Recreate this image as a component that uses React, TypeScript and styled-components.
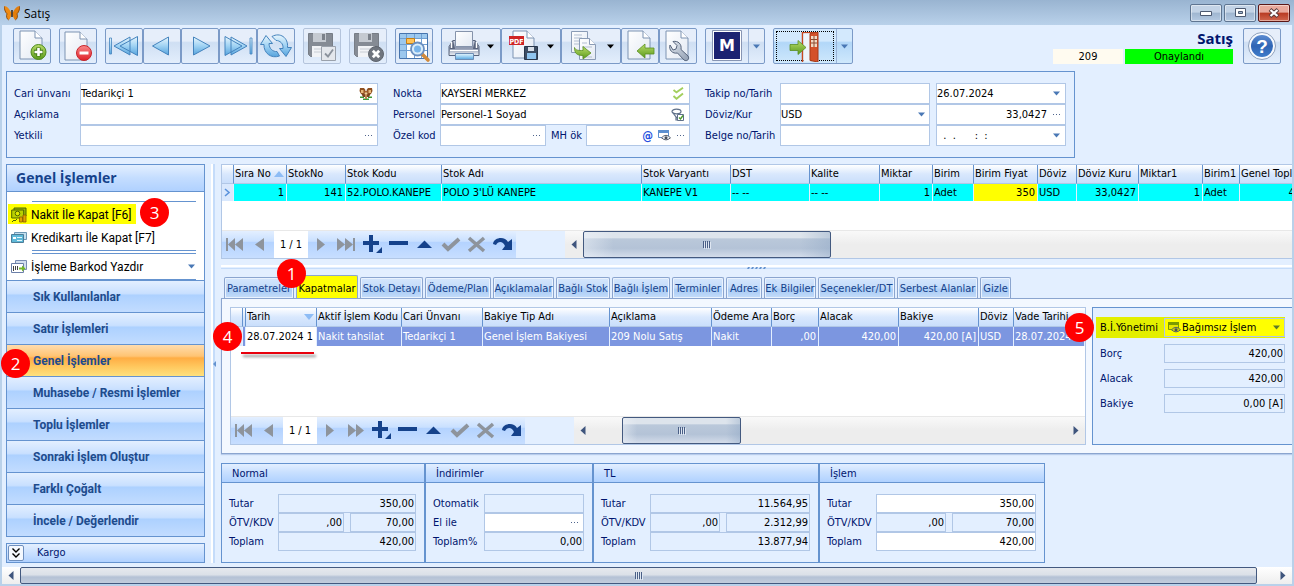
import React from 'react';
import styled, { createGlobalStyle, css } from 'styled-components';

const uiFont = `'DejaVu Sans Condensed', 'Liberation Sans', sans-serif`;
const shellFont = `'Open Sans', 'Noto Sans', sans-serif`;
const menuFont = `Roboto, 'Open Sans', sans-serif`;

const line = '#6593cf';
const softLine = '#b1c7e6';
const face = '#e3efff';
const navy = '#00156e';

const GlobalStyle = createGlobalStyle`
  * { box-sizing: border-box; }
  body { margin: 0; background: ${face}; }
  button, input, select { font: inherit; color: inherit; margin: 0; padding: 0; border: 0; background: none; border-radius: 0; }
  svg { display: block; flex: none; }
`;

/* ---------- window frame ---------- */

const Window = styled.div`
  min-height: 100vh;
  display: flex;
  flex-direction: column;
  background: ${face};
  border: solid #b9d1ea;
  border-width: 0 2px 2px;
  font: 11px/14px ${uiFont};
  color: #000;
`;

const TitleBar = styled.header`
  display: flex;
  align-items: center;
  height: 25px;
  margin: 0 -2px;
  padding: 0 4px;
  background: linear-gradient(#99b4d1, #b9d1ea);
`;

const WindowTitle = styled.h1`
  flex: 1;
  margin: 0 0 0 4px;
  padding-top: 2px;
  font: 12px/16px ${shellFont};
`;

const CaptionButtons = styled.div`
  display: flex;
  gap: 2px;
`;

const CaptionButton = styled.button<{ $close?: boolean }>`
  display: grid;
  place-items: center;
  width: 32px;
  height: 18px;
  border: 1px solid ${p => (p.$close ? '#5a1717' : '#5f7591')};
  border-radius: 2px;
  background: ${p =>
    p.$close
      ? 'linear-gradient(#e9a99c 0 45%, #b83a22 50%, #d0674f)'
      : 'linear-gradient(#c3d3e6 0 45%, #9fb6d0 50%, #b5cae2)'};
  box-shadow: inset 0 0 0 1px rgba(255, 255, 255, 0.45);
`;

/* ---------- toolbar ---------- */

const Toolbar = styled.div`
  display: flex;
  gap: 8px;
  padding: 3px 11px 7px;
`;

const ToolGroup = styled.div`
  display: flex;
`;

const ToolButton = styled.button<{ $width?: number; $disabled?: boolean; $active?: boolean }>`
  display: flex;
  width: ${p => p.$width ?? 38}px;
  height: 36px;
  border: 1px solid ${p => (p.$disabled ? '#b4c4dc' : '#7b9ac7')};
  border-radius: 2px;
  background: ${p =>
    p.$active
      ? 'linear-gradient(#d3e9fd 0 35%, #b2d7f8 40%, #cfe8fc)'
      : 'linear-gradient(#e6eefa 0 35%, #cfdff3 40%, #e3eefc)'};
`;

const FocusFrame = styled.span`
  flex: 1;
  margin: 2px;
  border: 1px dotted #000;
`;

const ToolbarStatus = styled.div`
  display: grid;
  grid-template-columns: 70px 108px;
  grid-template-rows: 21px 15px;
  column-gap: 2px;
  margin: 0 2px 0 auto;
  text-align: center;
`;

const StatusTitle = styled.h2`
  grid-column: 1 / 3;
  margin: 0;
  text-align: right;
  font: bold 15px/20px ${shellFont};
  color: ${navy};
`;

const StatusCell = styled.output<{ $bg: string }>`
  background: ${p => p.$bg};
  line-height: 15px;
`;

/* ---------- fields ---------- */

const FormPanel = styled.form`
  display: flex;
  gap: 15px;
  align-self: flex-start;
  margin-left: 4px;
  padding: 11px 8px 11px 7px;
  border: 1px solid ${line};
`;

const FormRow = styled.div`
  display: flex;
  align-items: stretch;
`;

const FieldLabel = styled.label<{ $width: number; $inset?: number }>`
  width: ${p => p.$width}px;
  padding-left: ${p => p.$inset ?? 0}px;
  align-self: center;
  color: ${navy};
  white-space: nowrap;
`;

const FieldBox = styled.span<{ $width?: number; $height?: number; $flat?: boolean; $bg?: string; $gap?: boolean; $tight?: boolean }>`
  display: flex;
  align-items: center;
  gap: ${p => (p.$tight ? 1 : 5)}px;
  ${p => (p.$width ? `width: ${p.$width}px;` : 'flex: 1; min-width: 0;')}
  height: ${p => p.$height ?? 21}px;
  padding-right: 1px;
  margin-left: ${p => (p.$gap ? 6 : 0)}px;
  border: 1px solid ${softLine};
  background: ${p => p.$bg ?? (p.$flat ? face : '#fff')};
  & > button:last-child, & > svg:last-child { margin-right: 3px; }
  & > svg:first-child { margin-left: 3px; }
`;

const textControl = css`
  flex: 1;
  min-width: 0;
  width: 100%;
  height: 100%;
  outline: 0;
`;

const TextInput = styled.input<{ $right?: boolean }>`
  ${textControl}
  text-align: ${p => (p.$right ? 'right' : 'left')};
`;

const SelectInput = styled.select`
  ${textControl}
  appearance: none;
`;

const IconButton = styled.button`
  display: grid;
  place-items: center;
  min-width: 9px;
  height: 100%;
`;

const AtSign = styled.span`
  font: bold 12px/16px ${uiFont};
  color: #2450e0;
`;

/* ---------- work area ---------- */

const Work = styled.div`
  flex: 1;
  display: grid;
  grid-template-columns: 199px 16px minmax(0, 1fr);
  margin: 6px 0 4px 4px;
`;

const Sidebar = styled.aside`
  display: flex;
  flex-direction: column;
`;

const SideFrame = styled.div`
  border: 1px solid ${line};
`;

const SideHeader = styled.h2`
  margin: 0;
  height: 27px;
  padding-left: 9px;
  border-bottom: 1px solid ${line};
  background: linear-gradient(#e3efff, #c4ddff 50%, #b0d1ff);
  font: bold 14px/26px ${shellFont};
  color: #15428b;
`;

const SideBody = styled.div`
  position: relative;
  display: flex;
  flex-direction: column;
  align-items: flex-start;
  height: 88px;
  padding: 9px 8px 0 1px;
  background: #fff;
`;

const SideRule = styled.hr`
  flex: none;
  align-self: stretch;
  height: 1px;
  margin: 0 0 2px 24px;
  border: 0;
  background: ${line};
`;

const SideAction = styled.button<{ $marked?: boolean; $wide?: boolean }>`
  flex: none;
  display: flex;
  align-items: center;
  gap: 4px;
  height: 20px;
  margin-bottom: 3px;
  padding: 1px ${p => (p.$wide ? 1 : 5)}px 0 3px;
  font: 12px/18px ${menuFont};
  white-space: nowrap;
  ${p => p.$wide && 'align-self: stretch;'}
  background: ${p => (p.$marked ? '#ff0' : 'none')};
  & > svg:last-child:not(:first-child) { margin-left: auto; }
`;

const SideGroup = styled.button<{ $active?: boolean }>`
  position: relative;
  display: block;
  width: 100%;
  height: 32px;
  padding-left: 26px;
  border-top: 1px solid ${line};
  text-align: left;
  font: bold 12px/30px ${menuFont};
  color: #1e4b8c;
  background: ${p =>
    p.$active
      ? 'linear-gradient(#ffdcae, #ffc473 36%, #ffad44 42%, #ffc85e 70%, #fee17e)'
      : 'linear-gradient(#e3efff, #c9e0ff 40%, #add1ff 46%, #c2dcff)'};
`;

const CargoBar = styled.div`
  display: flex;
  align-items: center;
  height: 20px;
  margin-top: 6px;
  padding-left: 1px;
  gap: 13px;
  border: 1px solid ${line};
  background: linear-gradient(#e3efff, #b0d1ff);
  color: ${navy};
`;

const ExpandButton = styled.button`
  display: grid;
  place-items: center;
  width: 16px;
  height: 16px;
  border: 1px solid #6f8fbd;
  border-radius: 2px;
  background: #f4f8fe;
`;

const VerticalSplitter = styled.div`
  display: flex;
  align-items: center;
  width: 4px;
  margin-left: 6px;
  border-left: 2px solid #fff;
  background: #c5dcfa;
`;

const Main = styled.main`
  display: flex;
  flex-direction: column;
  min-width: 0;
`;

/* ---------- data grids ---------- */

const GridFrame = styled.section<{ $grow?: boolean }>`
  display: flex;
  flex-direction: column;
  min-width: 0;
  ${p => p.$grow && 'flex: 1; border-right: 1px solid #b1c7e6;'}
  border-top: 1px solid ${softLine};
  border-left: 1px solid ${softLine};
  border-bottom: 1px solid ${softLine};
  background: #fff;
`;

const TableClip = styled.div<{ $space: number }>`
  flex: 1;
  overflow: hidden;
  padding-bottom: ${p => p.$space}px;
`;

const DataTable = styled.table<{ $fill?: boolean }>`
  table-layout: fixed;
  width: ${p => (p.$fill ? '100%' : '1px')};
  border-spacing: 0;
  white-space: nowrap;
`;

const Col = styled.col<{ $w?: number }>`
  width: ${p => (p.$w ? `${p.$w}px` : 'auto')};
`;

const HeadCell = styled.th`
  height: 19px;
  padding: 0 2px 0 1px;
  overflow: hidden;
  border-right: 1px solid ${line};
  border-bottom: 1px solid ${softLine};
  background: linear-gradient(#fff, #d9e8fd 50%, #c9defb);
  font-weight: normal;
  text-align: left;
  &:last-child { border-right: 0; }
`;

const HeadContent = styled.span`
  display: flex;
  align-items: center;
  overflow: hidden;
`;

const HeadText = styled.span`
  flex: 1;
  overflow: hidden;
`;

const Cell = styled.td<{ $right?: boolean; $bg?: string; $color?: string; $height?: number }>`
  height: ${p => p.$height ?? 17}px;
  padding: 0 2px 0 1px;
  overflow: hidden;
  border-right: 1px solid #e3efff;
  text-align: ${p => (p.$right ? 'right' : 'left')};
  background: ${p => p.$bg ?? '#0ff'};
  color: ${p => p.$color ?? '#000'};
`;

const GridFooter = styled.div`
  display: flex;
  height: 28px;
  border-top: 1px solid #e8e8e8;
`;

const Navigator = styled.div`
  display: flex;
  width: 343px;
  background: linear-gradient(90deg, transparent 294px, ${face} 294px),
    linear-gradient(#e3efff, #c9e0ff 38%, #b4d3ff 42%, #c7deff);
`;

const NavButton = styled.button`
  display: grid;
  place-items: center;
  width: 26px;
`;

const NavPosition = styled.output`
  width: 34px;
  background: #fff;
  text-align: center;
  line-height: 28px;
`;

const ScrollTrack = styled.div`
  flex: 1;
  display: flex;
  background: linear-gradient(#f9f9f9, #ededed 50%);
`;

const ScrollArrow = styled.button`
  display: grid;
  place-items: center;
  width: 18px;
`;

const ScrollThumb = styled.div<{ $width?: number; $offset?: number; $page?: boolean }>`
  display: grid;
  place-items: center;
  ${p => (p.$width ? `width: ${p.$width}px;` : 'flex: 1;')}
  margin-left: ${p => p.$offset ?? 0}px;
  border: 1px solid #43597f;
  border-radius: 2px;
  background: ${p =>
    p.$page
      ? 'linear-gradient(#e6e9ee, #dbe0e8 45%, #b4c1d5 60%, #c2cddd)'
      : `linear-gradient(90deg, rgba(240,244,250,.5), transparent 12%, transparent 88%, rgba(140,165,195,.4)),
         linear-gradient(#dde4ec 0 22%, #bac8da 28%, #b4c3d7 65%, #d3dcea)`};
`;

const ScrollSpacer = styled.div<{ $width?: number }>`
  ${p => (p.$width ? `width: ${p.$width}px;` : 'flex: 1;')}
`;

const PageScroll = styled.div`
  display: flex;
  height: 17px;
  background: linear-gradient(#fff, #eee);
`;

/* ---------- tabs ---------- */

const HorizontalSplitter = styled.div`
  display: flex;
  justify-content: center;
  height: 4px;
  margin: 6px 0;
  border-top: 2px solid #fff;
  border-bottom: 1px solid #c5dcfa;
`;

const TabBar = styled.div`
  position: relative;
  display: flex;
  align-items: flex-end;
  gap: 2px;
  height: 23px;
  padding-left: 3px;
`;

const Tab = styled.button<{ $w: number; $active?: boolean }>`
  width: ${p => p.$w}px;
  height: ${p => (p.$active ? 24 : 21)}px;
  padding-top: 2px;
  ${p => p.$active && 'margin-bottom: -1px;'}
  border: 1px solid #8ba5cf;
  border-bottom: 0;
  border-radius: 2px 2px 0 0;
  box-shadow: inset 0 0 0 1px ${p => (p.$active ? '#ff0' : '#e9f2fe')};
  white-space: nowrap;
  color: ${p => (p.$active ? '#000' : '#15428b')};
  background: ${p => (p.$active ? '#ff0' : 'linear-gradient(#d5e6fc, #c4dcfa 45%, #aaccf5 60%, #c4dcfa)')};
`;

const TabPage = styled.div`
  position: relative;
  flex: 1;
  display: flex;
  gap: 6px;
  padding: 8px 0 8px 8px;
  border: 1px solid #8ba5cf;
  border-right: 0;
  background: #f3f8ff;
  box-shadow: 0 1px 1px #b9cdec;
`;

const BalancePanel = styled.form`
  position: relative;
  display: flex;
  flex-direction: column;
  gap: 6px;
  width: 200px;
  padding: 9px 7px 0 3px;
  border: 1px solid ${line};
  border-right: 0;
  background: ${face};
`;

const BalanceRow = styled.div<{ $marked?: boolean }>`
  display: flex;
  height: ${p => (p.$marked ? 21 : 19)}px;
  padding: ${p => (p.$marked ? '1px 0' : '0')};
  background: ${p => (p.$marked ? '#e3ef00' : 'none')};
  label { ${p => p.$marked && 'color: #000;'} }
`;

/* ---------- totals ---------- */

const Totals = styled.div`
  display: flex;
  margin-top: 9px;
`;

const TotalsPanel = styled.section<{ $w: number }>`
  width: ${p => p.$w}px;
  border: 1px solid ${line};
`;

const TotalsTitle = styled.h3`
  margin: 0;
  height: 19px;
  padding-left: 10px;
  border-bottom: 1px solid ${line};
  background: linear-gradient(#e3efff, #c9e0ff 45%, #b0d1ff);
  font: inherit;
  line-height: 19px;
  color: ${navy};
`;

const TotalsBody = styled.div`
  padding: 11px 8px 11px 7px;
`;

/* ---------- call-outs ---------- */

const Badge = styled.span<{ $x: number; $y: number }>`
  position: absolute;
  left: ${p => p.$x}px;
  top: ${p => p.$y}px;
  z-index: 2;
  width: 29px;
  height: 29px;
  border-radius: 50%;
  background: #f00;
  color: #fff;
  text-align: center;
  font: 17px/29px ${shellFont};
`;

const Underline = styled.span`
  position: absolute;
  left: 19px;
  top: 53px;
  width: 73px;
  height: 2px;
  background: #e8000c;
  box-shadow: 2px 3px 3px rgba(0, 0, 0, 0.45);
`;

/* ---------- small glyphs ---------- */

const Down = ({ color = '#4a78b5' }: { color?: string }) => (
  <svg width="7" height="5" viewBox="0 0 7 5"><path d="M0 .5h7L3.500 4.500z" fill={color} /></svg>
);
const Dots = () => (
  <svg width="9" height="3" viewBox="0 0 9 3"><path d="M1 1h1v1H1zM4 1h1v1H4zM7 1h1v1H7z" fill="#4f648c" /></svg>
);
const Side = ({ right }: { right?: boolean }) => (
  <svg width="6" height="9" viewBox="0 0 6 9"><path d={right ? 'M.5 0v9L5.500 4.500z' : 'M5.500 0v9L.5 4.500z'} fill="#3f557d" /></svg>
);
const Grip = () => (
  <svg width="8" height="8" viewBox="0 0 8 8"><path d="M.5 0v7M2.500 0v7M4.500 0v7M6.500 0v7" stroke="#4a5f86" /><path d="M1.500 1v7M3.500 1v7M5.500 1v7M7.500 1v7" stroke="#dfe7f2" /></svg>
);
const Sort = ({ up }: { up?: boolean }) => (
  <svg width="10" height="6" viewBox="0 0 10 6"><path d={up ? 'M0 6h10L5 0z' : 'M0 0h10L5 6z'} fill="#8dbcf5" /></svg>
);
const Butterfly = () => (
  <svg width="16" height="16" viewBox="0 0 16 16">
    <path d="M7.500 8C5 2.500 2 .8 0 1.200c.2 3.500 1 6 3 7.600C1.800 11 2.600 14 4.600 15 6.300 14 7.300 11 7.500 8z" fill="#f08a12" />
    <path d="M8.500 8C11 2.500 14 .8 16 1.200c-.2 3.500-1 6-3 7.600 1.200 2.200.4 5.200-1.600 6.200C9.700 14 8.700 11 8.500 8z" fill="#e27d0c" />
    <path d="M0 1.200C.5 5 1.500 7.500 3 8.800 2 11 2.600 14 4.600 15M16 1.200c-.5 3.800-1.500 6.300-3 7.600 1 2.200.4 5.200-1.600 6.200" stroke="#7a3f08" fill="none" strokeWidth=".8" />
    <path d="M8 5v7" stroke="#2c1706" strokeWidth="1.400" />
  </svg>
);
const Dealer = () => (
  <svg width="14" height="13" viewBox="0 0 14 13">
    <path d="M1 9.500h4v1.500H1zM9 9.500h4v1.500H9zM4 11.500h6V13H4z" fill="#3f9a38" />
    <path d="M2 6l2 4h6l2-4-3 1H5z" fill="#7d4420" />
    <path d="M6 8h2v4H6z" fill="#b98a50" />
    <path d="M1 1h4l1.500 2L5.500 7H2L.5 4zM13 1H9L7.500 3l1 4H12l1.500-3z" fill="#8f5020" />
    <path d="M2 3h2.500v3H2zM9.500 3H12v3H9.500z" fill="#e8b878" />
    <path d="M5.500 4h3v4h-3z" fill="#a5622c" /><path d="M6 5.500h2v2H6z" fill="#f0cc98" />
  </svg>
);
const DoubleCheck = () => (
  <svg width="13" height="13" viewBox="0 0 13 13"><path d="M1.500 3l3 2.400L11 .8M1.500 9l3 2.800L11 6.500" fill="none" stroke="#a3cf5d" strokeWidth="1.900" /></svg>
);
const PersonPick = () => (
  <svg width="14" height="14" viewBox="0 0 14 14">
    <ellipse cx="5.500" cy="3.500" rx="4.500" ry="2.300" fill="#fff" stroke="#5f7089" strokeWidth="1.200" />
    <path d="M2 5l3 4v3h2M5 9c1 1 2 1 3 0" fill="none" stroke="#5f7089" strokeWidth="1.200" />
    <path d="M6.500 6.500h6v6h-6z" fill="#fff" stroke="#5f7089" /><path d="M8 9.500l1.500 1.500 2.500-3.500" fill="none" stroke="#4c9a2a" strokeWidth="1.400" />
  </svg>
);
const EyeWindow = ({ tint = '#5b8fd0' }: { tint?: string }) => (
  <svg width="13" height="11" viewBox="0 0 13 11">
    <path d="M.5.5h10v7H.5z" fill={tint === '#5b8fd0' ? '#fff' : '#e6e600'} stroke={tint} /><path d="M0 0h11v3H0z" fill={tint} />
    <path d="M3.500 7.800Q8 2.800 12.500 7.800 8 12 3.500 7.800z" fill={tint === '#5b8fd0' ? '#f2f4f8' : '#d9d900'} stroke="#56606e" /><circle cx="8" cy="7.700" r="1.500" fill="#46505c" />
  </svg>
);

/* ---------- side panel icons ---------- */

const CashIcon = () => (
  <svg width="16" height="16" viewBox="0 0 16 16">
    <path d="M3 1h12v8H3z" fill="#9db800" stroke="#4d6400" /><path d="M.7 3h12v8H.7z" fill="#b9cf00" stroke="#4d6400" />
    <circle cx="6.500" cy="6.500" r="2.300" fill="#e0ea00" stroke="#4d6400" /><path d="M1 15l2-2 1 1 2-2" fill="none" stroke="#4d6400" />
    <path d="M8.500 10h3v5h-3zM12 8h3v7h-3z" fill="#e0a000" stroke="#8a5c00" strokeWidth=".8" />
  </svg>
);
const CardIcon = () => (
  <svg width="16" height="12" viewBox="0 0 16 12">
    <path d="M3.500 .5h12v7h-12z" fill="#c4dfee" stroke="#6d97b5" /><path d="M.5 2.500h12v8H.5z" fill="#5fb9d8" stroke="#4c7d98" />
    <path d="M2 5h3v2H2z" fill="#fff" /><path d="M6 5.500h5M6 8.500h5" stroke="#e3f6fc" />
  </svg>
);
const BarcodeIcon = () => (
  <svg width="16" height="14" viewBox="0 0 16 14">
    <path d="M4.500.5h11v9h-11z" fill="#d5dfef" stroke="#7a8db3" /><path d="M.5 3.500h12v9H.5z" fill="#fff" stroke="#6b7fa8" />
    <path d="M2.500 6v5M4.500 6v4M6.500 6v4" stroke="#444" /><path d="M8 7.500h3v-2l3.500 3-3.500 3v-2H8z" fill="#76b82a" />
  </svg>
);

/* ---------- toolbar icons ---------- */

const Page = ({ x = 6, y = 2, w = 22, h = 28 }: { x?: number; y?: number; w?: number; h?: number }) => (
  <>
    <path d={`M${x} ${y}h${w - 7}l7 7v${h - 7}h-${w}z`} fill="url(#paper)" stroke="#7d93b2" />
    <path d={`M${x + w - 7} ${y}v7h7`} fill="#fff" stroke="#7d93b2" />
  </>
);
const Tool = ({ children, w = 36 }: { children: React.ReactNode; w?: number }) => (
  <svg width={w} height="34" viewBox={`0 0 ${w} 34`}>{children}</svg>
);
const HiddenDefs = styled.svg`
  position: absolute;
`;
const Defs = () => (
  <HiddenDefs width="0" height="0" aria-hidden="true">
    <defs>
      <linearGradient id="paper" x2="1" y2="1"><stop offset="0" stopColor="#fff" /><stop offset="1" stopColor="#e2e9f3" /></linearGradient>
      <linearGradient id="blue" x2="0" y2="1"><stop offset="0" stopColor="#e8f6fd" /><stop offset=".5" stopColor="#9fd2f3" /><stop offset="1" stopColor="#55a3dd" /></linearGradient>
      <linearGradient id="green" x2="0" y2="1"><stop offset="0" stopColor="#b9dc6a" /><stop offset="1" stopColor="#5a9a1c" /></linearGradient>
      <linearGradient id="red" x2="0" y2="1"><stop offset="0" stopColor="#f9898a" /><stop offset="1" stopColor="#e02027" /></linearGradient>
      <linearGradient id="help" x2="0" y2="1"><stop offset="0" stopColor="#5b8bd0" /><stop offset=".5" stopColor="#2f65b5" /><stop offset="1" stopColor="#3f7cc9" /></linearGradient>
      <linearGradient id="printer" x2="0" y2="1"><stop offset="0" stopColor="#cfd6e4" /><stop offset=".5" stopColor="#8b96ad" /><stop offset="1" stopColor="#eef1f7" /></linearGradient>
      <linearGradient id="steel" x2="1" y2="1"><stop offset="0" stopColor="#e3e9f0" /><stop offset="1" stopColor="#8f9db1" /></linearGradient>
    </defs>
  </HiddenDefs>
);
const tri = { fill: 'url(#blue)', stroke: '#4483bd', strokeLinejoin: 'round' as const };
const Floppy = () => (
  <>
    <path d="M4.500 4.500h24v23h-22l-2-2z" fill="#858b94" stroke="#777d86" /><path d="M9 4h13v9H9z" fill="#c5cad1" /><path d="M18 5h3v6h-3z" fill="#7b818a" />
    <path d="M8 17h17v11H8z" fill="#f1f3f6" /><path d="M10 20h12M10 23h12" stroke="#c8cdd4" />
  </>
);
const NewIcon = () => (
  <Tool><Page /><circle cx="24.500" cy="23" r="7.500" fill="url(#green)" stroke="#4d8a1c" /><path d="M24.500 18.500v9M20 23h9" stroke="#3d7512" strokeWidth="4.400" /><path d="M24.500 19v8M20.500 23h8" stroke="#fff" strokeWidth="2.600" /></Tool>
);
const DeleteIcon = () => (
  <Tool><Page x={5} y={3} /><circle cx="24" cy="24" r="7.500" fill="url(#red)" stroke="#c9252b" /><path d="M19.500 24h9" stroke="#fff" strokeWidth="3" /></Tool>
);
const FirstIcon = () => (
  <Tool><path d="M3.500 9v16h2V9z" {...tri} strokeWidth=".8" /><path d="M24 8v18L8 17zM31.500 7.500v19L14 17z" {...tri} /></Tool>
);
const PrevIcon = () => <Tool><path d="M24.500 8v18L8.500 17z" {...tri} /></Tool>;
const NextIcon = () => <Tool><path d="M11.500 8v18L28 17z" {...tri} /></Tool>;
const LastIcon = () => (
  <Tool><path d="M30 9v16h2V9z" {...tri} strokeWidth=".8" /><path d="M5 7.500v19L22 17zM11 8v18L27 17z" {...tri} /></Tool>
);
const RefreshIcon = () => (
  <Tool>
    <path d="M2.500 15.500L8 6.500l6.500 8h-3.500c0 5 4 8.500 8 8l2.500 4.500c-8.500 3-16-3-15.500-11.500z" {...tri} />
    <path d="M33.500 18.500L28 27.500l-6.500-8h3.500c.5-5-3-8-7-8l-4-4c8-4.500 16.500 1 15.500 11z" {...tri} />
  </Tool>
);
const SaveIcon = () => (
  <Tool><Floppy /><path d="M17.500 17.500h14v14h-14z" fill="#e4e7ec" stroke="#9aa1ab" /><path d="M21 24.500l3 3 5-7" fill="none" stroke="#8b929c" strokeWidth="1.800" /></Tool>
);
const CancelIcon = () => (
  <Tool><Floppy /><circle cx="26" cy="25" r="7.500" fill="#6f757e" stroke="#5f656e" /><path d="M22.800 21.800l6.400 6.400M29.200 21.800l-6.400 6.400" stroke="#fff" strokeWidth="2.800" /></Tool>
);
const SearchGridIcon = () => (
  <Tool>
    <path d="M3.500 4.500h28v25h-28z" fill="#fff" stroke="#4674ae" /><path d="M4 5h27v4H4zM4 9h6v20H4z" fill="#9cc8ee" />
    <path d="M10.500 5v24M18.500 5v24M25.500 5v24M4 9.500h27M4 15.500h27M4 21.500h27" stroke="#6f9fd2" fill="none" />
    <path d="M10.500 9.500h8v5h-8z" fill="#ffc256" stroke="#c47d14" />
    <path d="M26 25l6 6" stroke="#d18a3c" strokeWidth="3.600" strokeLinecap="round" /><circle cx="21.500" cy="20" r="6.500" fill="#d9edfb" stroke="#6a8fc0" strokeWidth="1.800" /><circle cx="21.500" cy="20" r="3.500" fill="#78b4ea" />
  </Tool>
);
const PrinterIcon = () => (
  <Tool w={40}>
    <path d="M11 11.500h22l4 6v9H7v-9z" fill="url(#printer)" stroke="#59647c" strokeLinejoin="round" />
    <path d="M8 15l3-4 2 9h18l2-9 3 4v5H8z" fill="#5a657d" />
    <path d="M13.500 2.500h17v15h-17z" fill="url(#paper)" stroke="#8593ab" /><path d="M9.500 13v6M34.500 13v6" stroke="#fff" strokeWidth="1.500" />
    <path d="M8 21.500h28" stroke="#fff" /><path d="M13.500 24.500h18v6h-18z" fill="url(#blue)" stroke="#6d8db5" />
  </Tool>
);
const PdfIcon = () => (
  <Tool w={40}>
    <Page x={11} y={2} w={21} h={27} />
    <path d="M7 7h15v9H7z" fill="#cf2424" />
    <text x="14.500" y="14.500" textAnchor="middle" fontSize="7" fontWeight="bold" fontFamily="DejaVu Sans Condensed" fill="#fff">PDF</text>
    <path d="M22.500 17.500h13v13h-13z" fill="#3d4d63" stroke="#29374b" /><path d="M26 18h6v4h-6z" fill="#d8dfe8" /><path d="M25 24h9v6h-9z" fill="#8fc4ee" />
  </Tool>
);
const CopyIcon = () => (
  <Tool w={40}>
    <path d="M9.500 2.500h16v21h-16z" fill="url(#paper)" stroke="#8b9cb6" /><path d="M12 6h8M12 9h8M12 12h8M12 15h6" stroke="#b3bfd1" />
    <path d="M17.500 9.500h10l6 6v15h-16z" fill="url(#paper)" stroke="#8b9cb6" /><path d="M27.500 9.500v6h6" fill="#fff" stroke="#8b9cb6" /><path d="M20 14h5M20 18h10M20 28h10" stroke="#b3bfd1" />
    <path d="M12.500 18.500c1 3 4 3 8.500 3v-4l8 6.500-8 6v-3.500c-6 0-8.500-2-8.500-8z" fill="url(#green)" stroke="#5b8f22" strokeWidth=".8" />
  </Tool>
);
const ImportIcon = () => (
  <Tool><Page /><path d="M15 22l8-7v4h9v6h-9v4z" fill="url(#green)" stroke="#5b8f22" strokeWidth=".8" /></Tool>
);
const SettingsIcon = () => (
  <Tool><Page /><path d="M10 16c-1.500 5 2.500 9 7.500 8l6.500 7c3 2 6-1 4-4l-7-6.500c1-5.500-3-9-8-8l4 4-1 3.500-3 1z" fill="url(#steel)" stroke="#56647b" strokeLinejoin="round" /></Tool>
);
const ModuleIcon = () => (
  <Tool w={42}>
    <path d="M6.500 1.500h29v30h-29z" fill="#fff" stroke="#8795b3" /><path d="M8 3h26v27H8z" fill="#1b2271" />
    <text x="21" y="22" textAnchor="middle" fontSize="16" fontWeight="900" fontFamily="DejaVu Sans" fill="#fff">M</text>
  </Tool>
);
const ExitIcon = () => (
  <svg width="56" height="30" viewBox="3 2 56 30">
    <path d="M28.500 32V2.500H44" fill="none" stroke="#c9471f" strokeWidth="1.500" /><path d="M29.500 3.500h7v28h-7z" fill="#eef4fb" />
    <path d="M36 3.500l8-1.500v30l-8-1.500z" fill="#d4512a" stroke="#a83a18" /><path d="M37 6h6v11h-6z" fill="#f4d9c4" /><path d="M40 6v11M37 9.500h6M37 13h6" stroke="#8a4a30" />
    <path d="M16 14.500h8v-4l8 7-8 7v-4h-8z" fill="url(#green)" stroke="#5b8f22" strokeWidth=".8" />
  </svg>
);
const HelpIcon = () => (
  <Tool>
    <circle cx="18" cy="17" r="13.500" fill="#f7fafe" stroke="#8ea0bb" /><circle cx="18" cy="17" r="11" fill="url(#help)" />
    <text x="18" y="24" textAnchor="middle" fontSize="19" fontWeight="bold" fontFamily="Liberation Sans" fill="#fff">?</text>
  </Tool>
);
const MenuArrow = styled.span<{ $divided?: boolean }>`
  display: grid;
  place-items: center;
  width: 16px;
  ${p => p.$divided && 'border-left: 1px solid #9bb3d6;'}
`;

/* ---------- record navigator ---------- */

const grey = '#8e949c';
const ink = '#15428b';
const Glyph = ({ color, children }: { color: string; children: React.ReactNode }) => (
  <svg width="20" height="19" viewBox="0 0 20 19" fill={color}>{children}</svg>
);

function RecordNavigator({ lastBar }: { lastBar?: boolean }) {
  return (
    <Navigator>
      <NavButton aria-label="İlk"><Glyph color={grey}><path d="M1 3h2v13H1zM10 3v13L3 9.500zM18 3v13l-8-6.500z" /></Glyph></NavButton>
      <NavButton aria-label="Önceki"><Glyph color={grey}><path d="M13 3v13L4 9.500z" /></Glyph></NavButton>
      <NavPosition>1 / 1</NavPosition>
      <NavButton aria-label="Sonraki"><Glyph color={grey}><path d="M6 3v13l8-6.500z" /></Glyph></NavButton>
      <NavButton aria-label="Son"><Glyph color={grey}>{lastBar ? <path d="M16 3h2v13h-2zM0 3v13l8-6.500zM8 3v13l8-6.500z" /> : <path d="M2 3v13l8-6.500zM10 3v13l8-6.500z" />}</Glyph></NavButton>
      <NavButton aria-label="Ekle"><Glyph color={ink}><path d="M6 0h4v6h6v4h-6v7H6v-7H0V6h6zM19 12v6h-6z" /></Glyph></NavButton>
      <NavButton aria-label="Sil"><Glyph color={ink}><path d="M0 6h19v4H0z" /></Glyph></NavButton>
      <NavButton aria-label="Düzenle"><Glyph color={ink}><path d="M2 13L9.500 5.500 17 13z" /></Glyph></NavButton>
      <NavButton aria-label="Onayla"><Glyph color="none"><path d="M2 9l5 5L18 4" stroke={grey} strokeWidth="4" /></Glyph></NavButton>
      <NavButton aria-label="İptal"><Glyph color="none"><path d="M2 3l15 13M17 3L2 16" stroke={grey} strokeWidth="3.500" /></Glyph></NavButton>
      <NavButton aria-label="Yenile"><Glyph color={ink}><path d="M0 9c1-7 12-8 15-2l4-3v11H9l3-4c-2-5-7-5-9-1z" /></Glyph></NavButton>
    </Navigator>
  );
}

/* ---------- data ---------- */

type Column = { title: string; value: string; w?: number; right?: boolean; sort?: 'up' | 'down'; bg?: string; color?: string };

const stockColumns: Column[] = [
  { title: 'Sıra No', value: '1', w: 53, right: true, sort: 'up' },
  { title: 'StokNo', value: '141', w: 59, right: true },
  { title: 'Stok Kodu', value: '52.POLO.KANEPE', w: 96 },
  { title: 'Stok Adı', value: "POLO 3'LÜ KANEPE", w: 200 },
  { title: 'Stok Varyantı', value: 'KANEPE V1', w: 89 },
  { title: 'DST', value: '-- --', w: 79 },
  { title: 'Kalite', value: '-- --', w: 70 },
  { title: 'Miktar', value: '1', w: 53, right: true },
  { title: 'Birim', value: 'Adet', w: 41 },
  { title: 'Birim Fiyat', value: '350', w: 64, right: true, bg: '#ff0' },
  { title: 'Döviz', value: 'USD', w: 39 },
  { title: 'Döviz Kuru', value: '33,0427', w: 62, right: true },
  { title: 'Miktar1', value: '1', w: 64, right: true },
  { title: 'Birim1', value: 'Adet', w: 37 },
  { title: 'Genel Toplam', value: '420,00', w: 86, right: true },
];

const closingColumns: Column[] = [
  { title: 'Tarih', value: '28.07.2024 1', w: 71, sort: 'down', bg: '#fff', color: '#000' },
  { title: 'Aktif İşlem Kodu', value: 'Nakit tahsilat', w: 85 },
  { title: 'Cari Ünvanı', value: 'Tedarikçi 1', w: 81 },
  { title: 'Bakiye Tip Adı', value: 'Genel İşlem Bakiyesi', w: 127 },
  { title: 'Açıklama', value: '209 Nolu Satış', w: 102 },
  { title: 'Ödeme Aracı', value: 'Nakit', w: 60 },
  { title: 'Borç', value: ',00', w: 47, right: true },
  { title: 'Alacak', value: '420,00', w: 80, right: true },
  { title: 'Bakiye', value: '420,00 [A]', w: 80, right: true },
  { title: 'Döviz', value: 'USD', w: 35 },
  { title: 'Vade Tarihi', value: '28.07.2024' },
];

const sideGroups = [
  'Sık Kullanılanlar', 'Satır İşlemleri', 'Genel İşlemler', 'Muhasebe / Resmi İşlemler',
  'Toplu İşlemler', 'Sonraki İşlem Oluştur', 'Farklı Çoğalt', 'İncele / Değerlendir',
];

const tabs: [string, number][] = [
  ['Parametreler', 70], ['Kapatmalar', 62], ['Stok Detayı', 63], ['Ödeme/Plan', 66], ['Açıklamalar', 61], ['Bağlı Stok', 54],
  ['Bağlı İşlem', 58], ['Terminler', 52], ['Adres', 36], ['Ek Bilgiler', 52], ['Seçenekler/DT', 77], ['Serbest Alanlar', 81], ['Gizle', 31],
];

type TotalRow = { label: string; values: string[]; editable?: boolean; dots?: boolean };
type Total = { title: string; w: number; split: number; rows: TotalRow[] };

const totals: Total[] = [
  { title: 'Normal', w: 204, split: 66, rows: [
    { label: 'Tutar', values: ['350,00'] }, { label: 'ÖTV/KDV', values: [',00', '70,00'] }, { label: 'Toplam', values: ['420,00'] } ] },
  { title: 'İndirimler', w: 168, split: 66, rows: [
    { label: 'Otomatik', values: [''] }, { label: 'El ile', values: [''], editable: true, dots: true }, { label: 'Toplam%', values: ['0,00'] } ] },
  { title: 'TL', w: 226, split: 70, rows: [
    { label: 'Tutar', values: ['11.564,95'] }, { label: 'ÖTV/KDV', values: [',00', '2.312,99'] }, { label: 'Toplam', values: ['13.877,94'] } ] },
  { title: 'İşlem', w: 226, split: 70, rows: [
    { label: 'Tutar', values: ['350,00'], editable: true }, { label: 'ÖTV/KDV', values: [',00', '70,00'] }, { label: 'Toplam', values: ['420,00'], editable: true } ] },
];

/* ---------- composed parts ---------- */

function DataGrid({ columns, closing }: { columns: Column[]; closing?: boolean }) {
  return (
    <DataTable $fill={closing}>
      <colgroup>
        <Col $w={12} />
        {closing && <Col $w={3} />}
        {columns.map(c => <Col key={c.title} $w={c.w} />)}
      </colgroup>
      <thead>
        <tr>
          <HeadCell aria-label="Satır" />
          {closing && <HeadCell aria-hidden="true" />}
          {columns.map(c => (
            <HeadCell key={c.title}>
              <HeadContent><HeadText>{c.title}</HeadText>{c.sort && <Sort up={c.sort === 'up'} />}</HeadContent>
            </HeadCell>
          ))}
        </tr>
      </thead>
      <tbody>
        <tr>
          <Cell $bg="#d9e8fd" $height={closing ? 19 : 17}>
            <svg width="8" height="9" viewBox="-1 0 8 9"><path d="M1 1l4 3.500L1 8" fill="none" stroke="#5b93dc" strokeWidth="1.600" /></svg>
          </Cell>
          {closing && <Cell $bg="#7c96e0" />}
          {columns.map(c => (
            <Cell key={c.title} $right={c.right} $bg={c.bg ?? (closing ? '#7c96e0' : undefined)} $color={c.color ?? (closing ? '#fff' : undefined)}>
              {c.value}
            </Cell>
          ))}
        </tr>
      </tbody>
    </DataTable>
  );
}

function TotalsBox({ total }: { total: Total }) {
  return (
    <TotalsPanel $w={total.w}>
      <TotalsTitle>{total.title}</TotalsTitle>
      <TotalsBody>
        {total.rows.map(row => {
          const id = `${total.title}-${row.label}`;
          return (
            <FormRow key={row.label}>
              <FieldLabel htmlFor={id} $width={total.title === 'İndirimler' ? 51 : 49}>{row.label}</FieldLabel>
              {row.values.map((value, i) => (
                <FieldBox key={i} $height={19} $flat={!row.editable} $gap={i > 0} $width={row.values.length > 1 && i === 0 ? total.split : undefined}>
                  <TextInput id={i === 0 ? id : undefined} aria-label={i > 0 ? row.label : undefined} $right defaultValue={value} readOnly={!row.editable} />
                  {row.dots && <IconButton type="button" aria-label="Seç"><Dots /></IconButton>}
                </FieldBox>
              ))}
            </FormRow>
          );
        })}
      </TotalsBody>
    </TotalsPanel>
  );
}

export default function App() {
  return (
    <Window>
      <GlobalStyle />
      <Defs />
      <TitleBar>
        <Butterfly />
        <WindowTitle>Satış</WindowTitle>
        <CaptionButtons>
          <CaptionButton aria-label="Simge durumuna küçült"><svg width="12" height="6" viewBox="0 0 12 6"><path d="M.5 1.500h11v4H.5z" fill="#fff" stroke="#4c5970" /></svg></CaptionButton>
          <CaptionButton aria-label="Ekranı kapla"><svg width="11" height="9" viewBox="0 0 11 9"><path d="M.5.5h10v8H.5z" fill="#fff" stroke="#4c5970" /><path d="M3.500 3.500h4v2h-4z" fill="#9fb6d0" stroke="#4c5970" /></svg></CaptionButton>
          <CaptionButton $close aria-label="Kapat"><svg width="12" height="10" viewBox="0 0 12 10"><path d="M2 1.500l8 7M10 1.500l-8 7" stroke="#5b3a3a" strokeWidth="4" /><path d="M2.500 2l7 6M9.500 2l-7 6" stroke="#fff" strokeWidth="2.200" /></svg></CaptionButton>
        </CaptionButtons>
      </TitleBar>

      <Toolbar>
        <ToolButton aria-label="Yeni"><NewIcon /></ToolButton>
        <ToolButton aria-label="Sil"><DeleteIcon /></ToolButton>
        <ToolGroup>
          <ToolButton aria-label="İlk"><FirstIcon /></ToolButton>
          <ToolButton aria-label="Önceki"><PrevIcon /></ToolButton>
          <ToolButton aria-label="Sonraki"><NextIcon /></ToolButton>
          <ToolButton aria-label="Son"><LastIcon /></ToolButton>
          <ToolButton aria-label="Yenile"><RefreshIcon /></ToolButton>
        </ToolGroup>
        <ToolButton $disabled disabled aria-label="Kaydet"><SaveIcon /></ToolButton>
        <ToolButton $disabled disabled aria-label="Vazgeç"><CancelIcon /></ToolButton>
        <ToolButton aria-label="Ara"><SearchGridIcon /></ToolButton>
        <ToolGroup>
          <ToolButton $width={60} aria-label="Yazdır"><PrinterIcon /><MenuArrow><Down color="#000" /></MenuArrow></ToolButton>
          <ToolButton $width={60} aria-label="PDF kaydet"><PdfIcon /><MenuArrow><Down color="#000" /></MenuArrow></ToolButton>
          <ToolButton $width={60} aria-label="Kopyala"><CopyIcon /><MenuArrow><Down color="#000" /></MenuArrow></ToolButton>
          <ToolButton aria-label="İçe al"><ImportIcon /></ToolButton>
          <ToolButton aria-label="Ayarlar"><SettingsIcon /></ToolButton>
        </ToolGroup>
        <ToolButton $width={60} aria-label="Modül"><ModuleIcon /><MenuArrow $divided><Down /></MenuArrow></ToolButton>
        <ToolButton $width={80} $active aria-label="Çıkış"><FocusFrame><ExitIcon /></FocusFrame><MenuArrow $divided><Down /></MenuArrow></ToolButton>
        <ToolbarStatus>
          <StatusTitle>Satış</StatusTitle>
          <StatusCell $bg="#fffbf0">209</StatusCell>
          <StatusCell $bg="#0f0">Onaylandı</StatusCell>
        </ToolbarStatus>
        <ToolButton aria-label="Yardım"><HelpIcon /></ToolButton>
      </Toolbar>

      <FormPanel>
        <div>
          <FormRow>
            <FieldLabel htmlFor="cari" $width={66}>Cari ünvanı</FieldLabel>
            <FieldBox $width={298}><TextInput id="cari" defaultValue="Tedarikçi 1" /><IconButton type="button" aria-label="Cari seç"><Dealer /></IconButton></FieldBox>
          </FormRow>
          <FormRow>
            <FieldLabel htmlFor="aciklama" $width={66}>Açıklama</FieldLabel>
            <FieldBox $width={298}><TextInput id="aciklama" /></FieldBox>
          </FormRow>
          <FormRow>
            <FieldLabel htmlFor="yetkili" $width={66}>Yetkili</FieldLabel>
            <FieldBox $width={298}><TextInput id="yetkili" /><IconButton type="button" aria-label="Yetkili seç"><Dots /></IconButton></FieldBox>
          </FormRow>
        </div>
        <div>
          <FormRow>
            <FieldLabel htmlFor="nokta" $width={47}>Nokta</FieldLabel>
            <FieldBox $width={250}><TextInput id="nokta" defaultValue="KAYSERİ MERKEZ" /><IconButton type="button" aria-label="Nokta seç"><DoubleCheck /></IconButton></FieldBox>
          </FormRow>
          <FormRow>
            <FieldLabel htmlFor="personel" $width={47}>Personel</FieldLabel>
            <FieldBox $width={250}><TextInput id="personel" defaultValue="Personel-1 Soyad" /><IconButton type="button" aria-label="Personel seç"><PersonPick /></IconButton></FieldBox>
          </FormRow>
          <FormRow>
            <FieldLabel htmlFor="ozelkod" $width={47}>Özel kod</FieldLabel>
            <FieldBox $width={106}><TextInput id="ozelkod" /><IconButton type="button" aria-label="Özel kod seç"><Dots /></IconButton></FieldBox>
            <FieldLabel htmlFor="mhok" $width={40} $inset={5}>MH ök</FieldLabel>
            <FieldBox $width={104}>
              <TextInput id="mhok" />
              <IconButton type="button" aria-label="E-posta"><AtSign>@</AtSign></IconButton>
              <IconButton type="button" aria-label="Göster"><EyeWindow /></IconButton>
              <IconButton type="button" aria-label="MH ök seç"><Dots /></IconButton>
            </FieldBox>
          </FormRow>
        </div>
        <div>
          <FormRow>
            <FieldLabel htmlFor="takip" $width={75}>Takip no/Tarih</FieldLabel>
            <FieldBox $width={150}><TextInput id="takip" /></FieldBox>
            <FieldBox $width={130} $gap><TextInput aria-label="Takip tarihi" defaultValue="26.07.2024" /><IconButton type="button" aria-label="Takvim"><Down /></IconButton></FieldBox>
          </FormRow>
          <FormRow>
            <FieldLabel htmlFor="doviz" $width={75}>Döviz/Kur</FieldLabel>
            <FieldBox $width={150}><SelectInput id="doviz"><option>USD</option></SelectInput><Down /></FieldBox>
            <FieldBox $width={130} $gap><TextInput aria-label="Kur" $right defaultValue="33,0427" /><IconButton type="button" aria-label="Kur seç"><Dots /></IconButton></FieldBox>
          </FormRow>
          <FormRow>
            <FieldLabel htmlFor="belge" $width={75}>Belge no/Tarih</FieldLabel>
            <FieldBox $width={150}><TextInput id="belge" /></FieldBox>
            <FieldBox $width={130} $gap><TextInput aria-label="Belge tarihi" defaultValue="  .  .      :  :" /><IconButton type="button" aria-label="Takvim"><Down /></IconButton></FieldBox>
          </FormRow>
        </div>
      </FormPanel>

      <Work>
        <Sidebar>
          <SideFrame>
            <SideHeader>Genel İşlemler</SideHeader>
            <SideBody>
              <SideRule />
              <SideAction $marked><CashIcon />Nakit İle Kapat [F6]</SideAction>
              <SideAction><CardIcon />Kredikartı İle Kapat [F7]</SideAction>
              <SideRule />
              <SideRule />
              <SideAction $wide><BarcodeIcon />İşleme Barkod Yazdır<Down /></SideAction>
              <SideRule />
              <Badge $x={133} $y={6}>3</Badge>
            </SideBody>
            {sideGroups.map((name, i) => (
              <SideGroup key={name} $active={i === 2}>{name}{i === 2 && <Badge $x={-6} $y={4}>2</Badge>}</SideGroup>
            ))}
          </SideFrame>
          <CargoBar>
            <ExpandButton aria-label="Kargo bölümünü aç"><svg width="8" height="10" viewBox="0 0 8 10"><path d="M.5.5L4 4 7.500.5M.5 5.500L4 9l3.500-3.500" fill="none" stroke="#000" strokeWidth="1.400" /></svg></ExpandButton>
            Kargo
          </CargoBar>
        </Sidebar>
        <VerticalSplitter><svg width="3" height="6" viewBox="0 0 3 6"><path d="M3 0v6L0 3z" fill={line} /></svg></VerticalSplitter>

        <Main>
          <GridFrame>
            <TableClip $space={29}><DataGrid columns={stockColumns} /></TableClip>
            <GridFooter>
              <RecordNavigator lastBar />
              <ScrollTrack>
                <ScrollArrow aria-label="Sola kaydır"><Side /></ScrollArrow>
                <ScrollThumb $width={248}><Grip /></ScrollThumb>
              </ScrollTrack>
            </GridFooter>
          </GridFrame>
          <HorizontalSplitter><svg width="19" height="3" viewBox="0 0 19 3"><path d="M1 0h2L2 2H0zM5 0h2L6 2H4zM9 0h2l-1 2H8zM13 0h2l-1 2h-2zM17 0h2l-1 2h-2z" fill={line} /></svg></HorizontalSplitter>
          <TabBar role="tablist">
            {tabs.map(([name, w], i) => <Tab key={name} role="tab" aria-selected={i === 1} $w={w} $active={i === 1}>{name}</Tab>)}
            <Badge $x={56} $y={-16}>1</Badge>
          </TabBar>
          <TabPage>
            <GridFrame $grow>
              <TableClip $space={0}><DataGrid columns={closingColumns} closing /></TableClip>
              <GridFooter>
                <RecordNavigator />
                <ScrollTrack>
                  <ScrollArrow aria-label="Sola kaydır"><Side /></ScrollArrow>
                  <ScrollThumb $width={119} $offset={30}><Grip /></ScrollThumb>
                  <ScrollSpacer />
                  <ScrollArrow aria-label="Sağa kaydır"><Side right /></ScrollArrow>
                </ScrollTrack>
              </GridFooter>
            </GridFrame>
            <BalancePanel>
              <BalanceRow $marked>
                <FieldLabel htmlFor="biy" $width={68} $inset={4}>B.İ.Yönetimi</FieldLabel>
                <FieldBox $height={19} $bg="#ff0" $tight><EyeWindow tint="#7c9a00" /><SelectInput id="biy"><option>Bağımsız İşlem</option></SelectInput><Down color="#5c7a2a" /></FieldBox>
              </BalanceRow>
              {[['Borç', '420,00'], ['Alacak', '420,00'], ['Bakiye', '0,00 [A]']].map(([label, value]) => (
                <BalanceRow key={label}>
                  <FieldLabel htmlFor={`b-${label}`} $width={68} $inset={4}>{label}</FieldLabel>
                  <FieldBox $height={19} $flat><TextInput id={`b-${label}`} $right readOnly defaultValue={value} /></FieldBox>
                </BalanceRow>
              ))}
              <Badge $x={-28} $y={5}>5</Badge>
            </BalancePanel>
            <Badge $x={-9} $y={23}>4</Badge>
            <Underline />
          </TabPage>
          <Totals>{totals.map(t => <TotalsBox key={t.title} total={t} />)}</Totals>
        </Main>
      </Work>

      <PageScroll>
        <ScrollArrow aria-label="Sola kaydır"><Side /></ScrollArrow>
        <ScrollThumb $page><Grip /></ScrollThumb>
        <ScrollSpacer $width={17} />
        <ScrollArrow aria-label="Sağa kaydır"><Side right /></ScrollArrow>
      </PageScroll>
    </Window>
  );
}
